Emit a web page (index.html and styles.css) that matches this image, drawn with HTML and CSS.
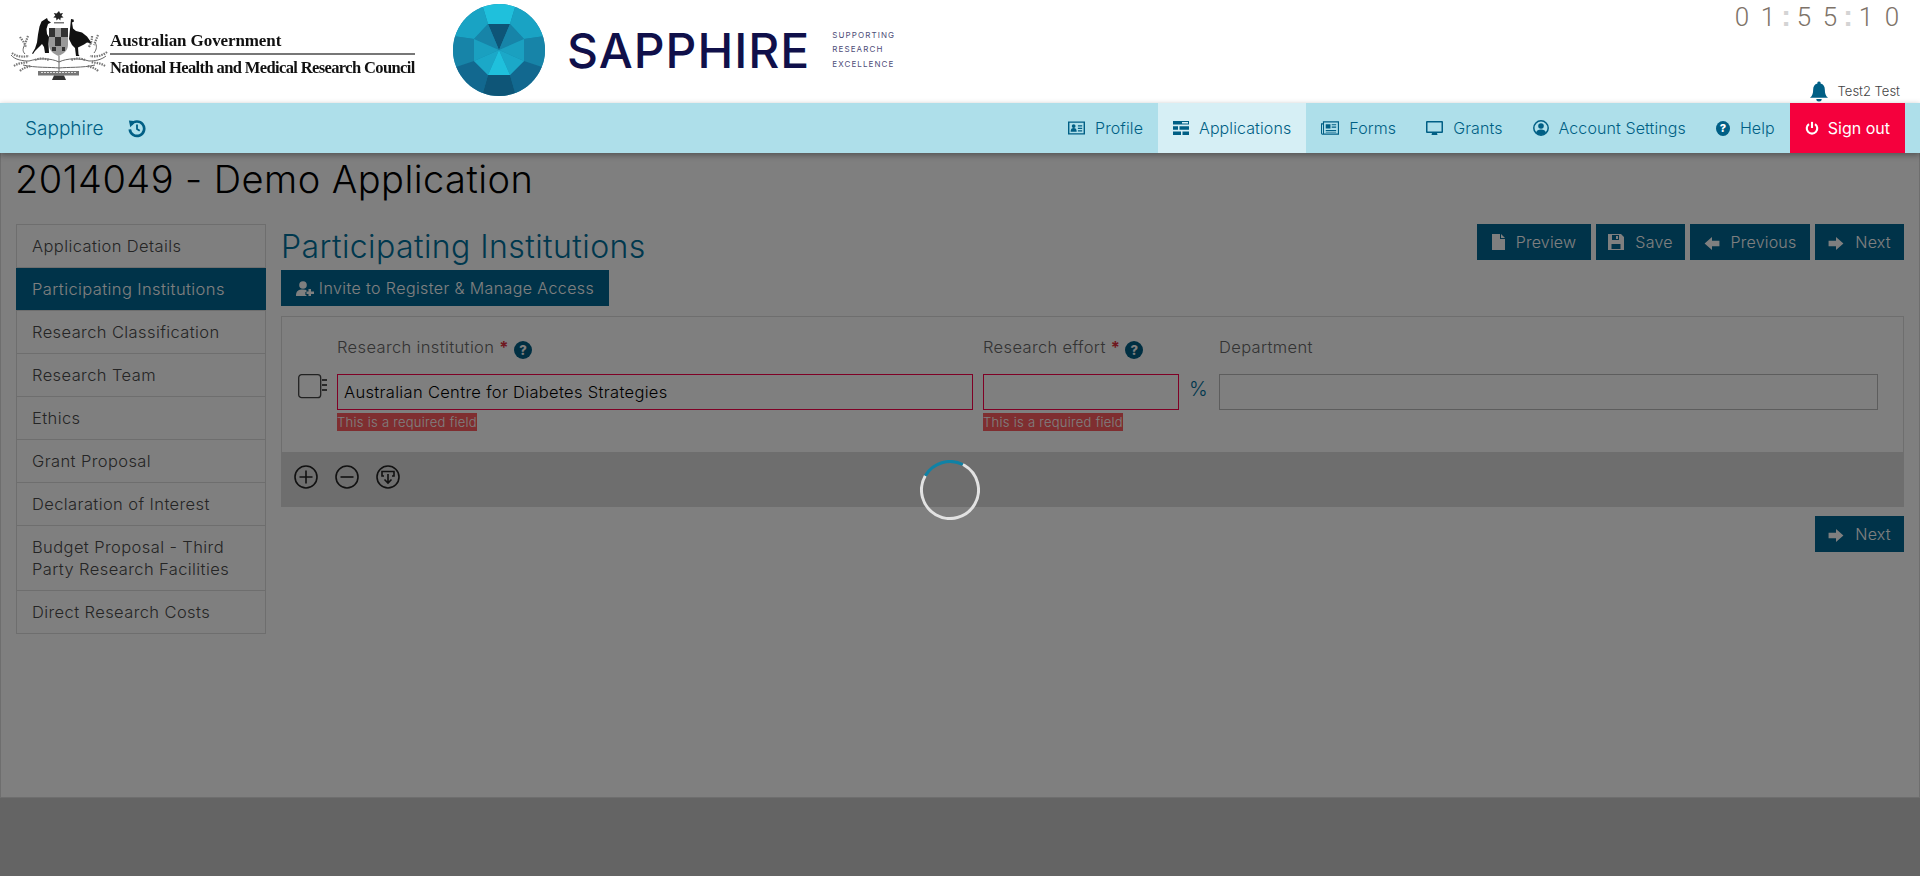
FILE: index.html
```html
<!DOCTYPE html>
<html lang="en">

<head>
    <meta charset="UTF-8">
    <meta name="viewport" content="width=device-width, initial-scale=1.0">
    <title>2014049 - Demo Application</title>
    <link rel="stylesheet" href="styles.css">
</head>

<body>
    <header class="top">
        <div class="gov-logo">
            <svg class="crest" viewBox="10 10 100 72" width="100" height="72">
                <path d="M59 11l1.200 2.600 2.800-.6-1.500 2.400 2 2-2.800.3-.4 2.800-1.800-2-2 2-.4-2.800-2.800-.3 2-2-1.500-2.400 2.800.6z" fill="#222"/>
                <path d="M54 22h10v1.500H54z" fill="#777"/>
                <path d="M47 18l1 2.500 3 2-3 1.500-1.500 5 .5 5 2 3-.5 7 .5 9h-4l-1-6-2-3-3 3-4 4-2 3-1-.5 3-5 2-6 1-8 1.500-8 2-5z" fill="#111"/>
                <path d="M71 19l2.500.5.5 2-2 1 1 6 3 2.500 6 1.500 5 4 5 7-5-1-3 2-4 2-2 1 .5 7 1 1.500h-3.500l-1-8-3-3-3-6z" fill="#111"/>
                <path d="M49 28h19v17c0 6-5 9-9.500 11C54 54 49 51 49 45z" fill="#999"/>
                <path d="M49 28h6v9h-6zM61 28h7v9h-7zM55 37h6v9h-6zM52 47h4v4h-4zM62 47h3v4h-3z" fill="#333"/>
                <g fill="none" stroke="#666" stroke-width="1">
                    <path d="M59 56v16M59 62c-8-4-20-4-30-1M59 62c8-4 20-4 30-1M29 61c-6 0-14-1-18-6M89 61c6 0 12-1 17-5"/>
                    <path d="M59 68c-8-1-24 0-36-3M59 68c8-1 24 0 36-3M25 44c-2 4-3 7 0 10M95 42c2 4 2 7-1 11"/>
                </g>
                <g fill="none" stroke="#777" stroke-width="2.200" stroke-dasharray="1.500 1">
                    <path d="M20 37c2 3 5 6 6 11M28 36l-3 8M92 36c0 4-1 7-3 11M98 35l-4 10"/>
                    <path d="M12 53c5 4 11 4 17 3M107 52c-5 4-11 5-17 4M14 66c4-3 9-3 14-4M105 66c-4-3-9-3-14-4M20 71c3-3 7-4 11-5M98 71c-3-3-7-4-11-5"/>
                    <path d="M35 60c4-2 9-2 14 0M85 60c-4-2-9-2-14 0"/>
                </g>
                <path d="M38 71h41v4.500H38z" fill="#777"/>
                <path d="M41 72.500h35" stroke="#ddd" stroke-width="1" stroke-dasharray="2 1"/>
                <path d="M54 75.500h10l2 4.500H52z" fill="#333"/>
            </svg>
            <div class="gov-text">
                <div class="gov-line gov-first">Australian Government</div>
                <div class="gov-line gov-second">National Health and Medical Research Council</div>
            </div>
        </div>
        <div class="sapphire-logo">
            <svg class="gem" viewBox="0 0 92 92" width="92" height="92">
                <defs>
                    <clipPath id="gemclip"><circle cx="46" cy="46" r="46"/></clipPath>
                </defs>
                <g clip-path="url(#gemclip)">
                    <rect width="92" height="92" fill="#1784a8"/>
                    <path d="M29 0H63L57 20 35 20z" fill="#1fc0dc"/>
                    <path d="M63 0H92V32L71 35 57 20z" fill="#19a3c4"/>
                    <path d="M29 0H0V32L21 35 35 20z" fill="#19a3c4"/>
                    <path d="M0 32L21 35V57L0 64z" fill="#1784a8"/>
                    <path d="M92 32L71 35V57L92 64z" fill="#1784a8"/>
                    <path d="M0 64L21 57 35 71 29 92H0z" fill="#12688f"/>
                    <path d="M92 64L71 57 57 71 63 92H92z" fill="#12688f"/>
                    <path d="M35 71H57L63 92H29z" fill="#0e5577"/>
                    <path d="M35 20H57L46 46z" fill="#0e5577"/>
                    <path d="M35 20L21 35 46 46z" fill="#1784a8"/>
                    <path d="M57 20L71 35 46 46z" fill="#1784a8"/>
                    <path d="M21 35V57L46 46z" fill="#1aa0c0"/>
                    <path d="M71 35V57L46 46z" fill="#1aa0c0"/>
                    <path d="M21 57L35 71 46 46z" fill="#1ba8c8"/>
                    <path d="M71 57L57 71 46 46z" fill="#1ba8c8"/>
                    <path d="M35 71H57L46 46z" fill="#1fc0dc"/>
                </g>
            </svg>
            <div class="sapphire-name">SAPPHIRE</div>
            <div class="sapphire-tag">
                <span>SUPPORTING</span>
                <span>RESEARCH</span>
                <span>EXCELLENCE</span>
            </div>
        </div>
        <div class="top-right">
            <div class="clock">
                <span class="digit">0</span><span class="digit">1</span><span class="colon">:</span><span class="digit">5</span><span class="digit">5</span><span class="colon">:</span><span class="digit">1</span><span class="digit">0</span>
            </div>
            <div class="user">
                <svg class="bell" viewBox="0 0 20 22" width="18" height="21"><path d="M10 0a1.800 1.800 0 0 1 1.800 2.200C15 3 16.500 5.600 16.500 9c0 4 .8 6.500 3.500 9H0c2.700-2.500 3.500-5 3.500-9 0-3.400 1.500-6 4.700-6.800A1.800 1.800 0 0 1 10 0zM7 19.200h6a3 2.800 0 0 1-6 0z" fill="#005f85"/></svg>
                <span>Test2 Test</span>
            </div>
        </div>
    </header>

    <nav class="nav">
        <div class="nav-left">
            <a class="brand">Sapphire</a>
            <svg class="history" viewBox="0 0 20 20" width="18" height="19">
                <path d="M3.500 5.500A8 8 0 1 1 2 11" fill="none" stroke="#005f85" stroke-width="3"/>
                <path d="M1 1l8 1-6.500 6.500z" fill="#005f85"/>
                <path d="M10 5.500V10.500L13 12.500" fill="none" stroke="#005f85" stroke-width="2"/>
            </svg>
        </div>
        <ul class="menu">
            <li class="menu-item">
                <svg viewBox="0 0 18 14" width="17" height="14"><path d="M0 0h18v14H0zM1.500 1.500v11h15v-11z" fill="#005f85" fill-rule="evenodd"/><circle cx="6" cy="5" r="2" fill="#005f85"/><path d="M2.800 11c0-3 1.200-4 3.200-4s3.200 1 3.200 4zM10.500 4h4.500v1.300h-4.500zM10.500 6.700h4.500V8h-4.500zM10.500 9.400h4.500v1.300h-4.500z" fill="#005f85"/></svg>
                Profile
            </li>
            <li class="menu-item active">
                <svg viewBox="0 0 16 14" width="16" height="14"><path d="M0 0h16v3.600H0zM9 1v1.600h6V1zM0 5.200h5v3.600H0zM6.500 5.200H16v3.600H6.500zM0 10.400h8V14H0zM9.500 10.400H16V14H9.500z" fill="#005f85" fill-rule="evenodd"/></svg>
                Applications
            </li>
            <li class="menu-item">
                <svg viewBox="0 0 19 14" width="18" height="14"><path d="M0 2h2V0h17v14H1.500A1.500 1.500 0 0 1 0 12.500zM3.200 1.200v11.600h14.600V1.200zM1.100 3.200v9.300a.5.500 0 0 0 1 0V3.200z" fill="#005f85" fill-rule="evenodd"/><path d="M5 3h5v4.500H5zM11.300 3H16v1.200h-4.700zM11.300 5.500H16v1.200h-4.700zM5 9h11v1.200H5zM5 11h11v.8H5z" fill="#005f85"/></svg>
                Forms
            </li>
            <li class="menu-item">
                <svg viewBox="0 0 17 15" width="17" height="15"><path d="M1 0h15a1 1 0 0 1 1 1v10a1 1 0 0 1-1 1h-5l.5 2h-6l.5-2H1a1 1 0 0 1-1-1V1a1 1 0 0 1 1-1zM1.500 1.500v9h14v-9z" fill="#005f85" fill-rule="evenodd"/></svg>
                Grants
            </li>
            <li class="menu-item">
                <svg viewBox="0 0 16 16" width="16" height="16"><circle cx="8" cy="8" r="7.200" fill="none" stroke="#005f85" stroke-width="1.500"/><circle cx="8" cy="6" r="2.800" fill="#005f85"/><path d="M3 13c.5-2.700 2.500-3.500 5-3.500s4.500.8 5 3.500c-1.300 1.300-3 2-5 2s-3.700-.7-5-2z" fill="#005f85"/></svg>
                Account Settings
            </li>
            <li class="menu-item">
                <span class="q-mark q-small">?</span>
                Help
            </li>
            <li class="menu-item signout">
                <svg viewBox="0 0 16 16" width="14" height="16"><path d="M8 1v7" stroke="#fff" stroke-width="2.400" fill="none"/><path d="M4.500 3.500a6 6 0 1 0 7 0" stroke="#fff" stroke-width="2.400" fill="none"/></svg>
                Sign out
            </li>
        </ul>
    </nav>

    <main class="page">
        <h1 class="app-title">2014049 - Demo Application</h1>
        <div class="layout">
            <ul class="side">
                <li>Application Details</li>
                <li class="current">Participating Institutions</li>
                <li>Research Classification</li>
                <li>Research Team</li>
                <li>Ethics</li>
                <li>Grant Proposal</li>
                <li>Declaration of Interest</li>
                <li>Budget Proposal - Third Party Research Facilities</li>
                <li>Direct Research Costs</li>
            </ul>
            <section class="content">
                <div class="content-head">
                    <h2>Participating Institutions</h2>
                    <div class="actions">
                        <button class="btn btn-preview" type="button">
                            <svg viewBox="0 0 13 16" width="13" height="16"><path d="M0 0h8v5h5v11H0zM9 0l4 4H9z" fill="#fff"/></svg>
                            Preview
                        </button>
                        <button class="btn btn-save" type="button">
                            <svg viewBox="0 0 16 16" width="16" height="16"><path d="M0 0h13l3 3v13H0zM4 1v5h7V1zM8 2h2v3H8zM3.500 10v5h9v-5z" fill="#fff" fill-rule="evenodd"/></svg>
                            Save
                        </button>
                        <button class="btn btn-prev" type="button">
                            <svg class="arrow" viewBox="0 0 16 14" width="16" height="13"><path d="M0 7L8 0v4h8v6H8v4z" fill="#fff"/></svg>
                            Previous
                        </button>
                        <button class="btn btn-next" type="button">
                            <svg class="arrow" viewBox="0 0 16 14" width="16" height="13"><path d="M16 7L8 0v4H0v6h8v4z" fill="#fff"/></svg>
                            Next
                        </button>
                    </div>
                </div>
                <button class="btn btn-invite" type="button">
                    <svg viewBox="0 0 18 15" width="18" height="15"><circle cx="7" cy="4" r="3.800" fill="#fff"/><path d="M0 15c0-5 2-6.500 7-6.500 1.500 0 2.600.2 3.400.5V11h-1v3h1v1z" fill="#fff"/><path d="M12.500 8h2.500v2.500h3V13h-3v2h-2.500v-2h-2v-2.500h2z" fill="#fff"/></svg>
                    Invite to Register &amp; Manage Access
                </button>

                <div class="panel">
                    <div class="panel-body">
                        <div></div>
                        <div class="field-label">Research institution <span class="req">*</span> <span class="q-mark">?</span></div>
                        <div class="field-label">Research effort <span class="req">*</span> <span class="q-mark">?</span></div>
                        <div></div>
                        <div class="field-label">Department</div>

                        <div class="row-icon">
                            <svg viewBox="0 0 30 25" width="30" height="25"><rect x=".7" y=".7" width="22" height="23" rx="3" fill="none" stroke="#444" stroke-width="1.300"/><path d="M24 5h5v2h-5zM24 10h5v2h-5zM24 15h5v2h-5z" fill="#555"/></svg>
                        </div>
                        <div>
                            <input class="field invalid wide" type="text" value="Australian Centre for Diabetes Strategies">
                            <span class="error-tag">This is a required field</span>
                        </div>
                        <div>
                            <input class="field invalid" type="text" value="">
                            <span class="error-tag">This is a required field</span>
                        </div>
                        <div class="percent">%</div>
                        <div>
                            <input class="field" type="text" value="">
                        </div>
                    </div>
                    <div class="panel-foot">
                        <svg viewBox="0 0 24 24" width="24" height="24"><circle cx="12" cy="12" r="11" fill="none" stroke="#222" stroke-width="1.600"/><path d="M12 5.500v13M5.500 12h13" stroke="#222" stroke-width="1.600"/></svg>
                        <svg viewBox="0 0 24 24" width="24" height="24"><circle cx="12" cy="12" r="11" fill="none" stroke="#222" stroke-width="1.600"/><path d="M5.500 12h13" stroke="#222" stroke-width="1.600"/></svg>
                        <svg viewBox="0 0 24 24" width="24" height="24"><circle cx="12" cy="12" r="11" fill="none" stroke="#222" stroke-width="1.600"/><path d="M8 11H6V6.500h12V11h-2M12 9v9M8.500 14.500L12 18l3.500-3.500" fill="none" stroke="#222" stroke-width="1.600"/></svg>
                    </div>
                </div>

                <div class="bottom-actions">
                    <button class="btn btn-next" type="button">
                        <svg class="arrow" viewBox="0 0 16 14" width="16" height="13"><path d="M16 7L8 0v4H0v6h8v4z" fill="#fff"/></svg>
                        Next
                    </button>
                </div>
            </section>
        </div>
    </main>

    <div class="overlay">
        <svg class="spinner" viewBox="0 0 60 60" width="60" height="60">
            <circle cx="30" cy="30" r="28.500" fill="none" stroke="#e2e2e2" stroke-width="3" stroke-dasharray="0 43 136.100" transform="rotate(-150 30 30)"/>
            <circle cx="30" cy="30" r="28.500" fill="none" stroke="#0f82a6" stroke-width="3" stroke-dasharray="43 136.100" transform="rotate(-150 30 30)"/>
        </svg>
    </div>
</body>

</html>
```

FILE: styles.css
```css
* {
    box-sizing: border-box;
}

html,
body {
    height: 100%;
}

body {
    margin: 0;
    height: 876px;
    overflow: hidden;
    background-color: #c8c8c8;
    font-family: Inter, "Open Sans", sans-serif;
    font-weight: 300;
    font-size: 16.5px;
    letter-spacing: .4px;
    color: #555;
}

ul {
    list-style: none;
    margin: 0;
    padding: 0;
}

/* header */
.top {
    display: flex;
    height: 103px;
    background-color: #fff;
    padding-left: 10px;
    letter-spacing: 0;
}

.gov-logo {
    display: flex;
    width: 443px;
    padding-top: 10px;
}

.crest {
    filter: blur(.4px);
}

.gov-text {
    width: 305px;
    padding-top: 21px;
    font-family: "Liberation Serif", serif;
    font-weight: 700;
    color: #111;
    filter: blur(.3px);
}

.gov-line {
    font-size: 17px;
    line-height: 20px;
    white-space: nowrap;
}

.gov-first {
    border-bottom: 2px solid #777;
    padding-bottom: 2px;
    margin-bottom: 3px;
    letter-spacing: -.1px;
}

.gov-second {
    font-size: 16.5px;
    letter-spacing: -.62px;
}

.sapphire-logo {
    display: flex;
    align-items: center;
    height: 100px;
}

.sapphire-name {
    margin-left: 22px;
    font-size: 48px;
    font-weight: 500;
    color: #10104a;
    letter-spacing: 1px;
}

.sapphire-tag {
    display: flex;
    flex-direction: column;
    gap: 3px;
    margin-left: 22px;
    font-size: 8px;
    font-weight: 400;
    line-height: 11.500px;
    letter-spacing: 1.100px;
    color: #4d4d78;
}

.top-right {
    display: flex;
    flex-direction: column;
    justify-content: space-between;
    align-items: flex-end;
    margin-left: auto;
    padding-right: 15px;
}

.clock {
    display: flex;
    height: 34px;
    font-family: Roboto, sans-serif;
    font-weight: 300;
    font-size: 26px;
    line-height: 34px;
    color: #7d7268;
}

.digit {
    width: 26px;
    text-align: center;
}

.colon {
    width: 10px;
    text-align: center;
    font-family: "Liberation Sans", sans-serif;
    font-weight: 700;
    font-size: 29px;
    line-height: 32px;
    color: #d4d4d4;
}

.user {
    display: flex;
    align-items: center;
    gap: 10px;
    height: 24px;
    padding-right: 5px;
    font-size: 13px;
    color: #444;
}

/* nav */
.nav {
    position: relative;
    z-index: 3;
    display: flex;
    justify-content: space-between;
    height: 50px;
    background-color: #aedfea;
    padding-right: 15px;
    box-shadow: 0 2px 6px rgba(0, 0, 0, .35);
}

.nav-left {
    display: flex;
    align-items: center;
    padding-left: 25px;
    gap: 25px;
    letter-spacing: 0;
}

.brand {
    font-size: 19px;
    color: #005f85;
}

.menu {
    display: flex;
}

.menu-item {
    display: flex;
    align-items: center;
    gap: 10px;
    padding: 0 15px;
    color: #005f85;
    font-size: 16px;
    letter-spacing: .1px;
}

.menu-item.active {
    background-color: #d6eff5;
}

.menu-item.signout {
    background-color: #f5003d;
    color: #fff;
    font-weight: 400;
    letter-spacing: 0;
    gap: 9px;
}

.q-mark {
    display: inline-flex;
    align-items: center;
    justify-content: center;
    width: 18px;
    height: 18px;
    border-radius: 50%;
    background-color: #005f85;
    color: #fff;
    font-size: 13px;
    font-weight: 800;
    letter-spacing: 0;
    vertical-align: -2px;
}

.q-small {
    width: 14px;
    height: 15px;
    font-size: 11px;
}

/* page */
.page {
    height: 645px;
    background-color: #fff;
    border: 1px solid #ddd;
    border-width: 0 1px 1px;
    padding: 0 15px;
}

.app-title {
    margin: 0 0 0 -1px;
    padding-top: 5px;
    height: 71px;
    font-size: 38px;
    line-height: 42px;
    font-weight: 300;
    letter-spacing: .44px;
    color: #000;
}

.layout {
    display: flex;
    gap: 15px;
}

.side {
    width: 250px;
    flex: none;
    align-self: flex-start;
    border: 1px solid #ddd;
    border-bottom: 0;
}

.side li {
    padding: 10px 15px;
    border-bottom: 1px solid #ddd;
    line-height: 22px;
    color: #4a4a4a;
}

.side li.current {
    background-color: #006692;
    color: #fff;
    margin: 0 -1px;
    padding-left: 16px;
}

.content {
    flex: 1;
}

.content-head {
    display: flex;
    justify-content: space-between;
    height: 46px;
}

.content-head h2 {
    margin: 0;
    font-size: 32px;
    line-height: 46px;
    font-weight: 300;
    letter-spacing: .42px;
    color: #00709c;
}

.actions {
    display: flex;
    gap: 5px;
}

.btn {
    display: inline-flex;
    align-items: center;
    justify-content: center;
    gap: 11px;
    height: 36px;
    border: 0;
    padding: 0;
    background-color: #006692;
    color: #fff;
    font-family: Inter, sans-serif;
    font-weight: 300;
    font-size: 16px;
    letter-spacing: .2px;
}

.btn .arrow {
    margin-top: 3px;
}

.btn-preview {
    width: 114px;
}

.btn-save {
    width: 89px;
}

.btn-prev {
    width: 120px;
}

.btn-next {
    width: 89px;
}

.btn-invite {
    width: 328px;
    gap: 5px;
    letter-spacing: .4px;
}

.panel {
    margin-top: 10px;
    border: 1px solid #ddd;
    border-bottom: 0;
}

.panel-body {
    display: grid;
    grid-template-columns: 55px 646px 196px 40px 659px;
    grid-template-rows: 22px auto;
    row-gap: 16px;
    padding: 19px 0 21px;
}

.field-label {
    line-height: 22px;
    color: #666;
    letter-spacing: .36px;
    white-space: nowrap;
}

.req {
    color: #e03040;
    font-weight: 700;
}

.row-icon {
    padding-left: 16px;
}

.row-icon svg {
    display: block;
}

.field {
    display: block;
    width: 100%;
    height: 36px;
    border: 1px solid #bbb;
    background-color: #fff;
    padding: 0 6px;
    font-family: Inter, sans-serif;
    font-weight: 300;
    font-size: 16.5px;
    letter-spacing: .32px;
    color: #000;
}

.field.invalid {
    border-color: #ff004b;
}

.field.wide {
    width: 636px;
}

.error-tag {
    display: block;
    width: fit-content;
    margin-top: 3px;
    background-color: #ff5c60;
    color: #fff;
    font-size: 13px;
    line-height: 18px;
    letter-spacing: .27px;
    white-space: nowrap;
}

.percent {
    padding-top: 3px;
    padding-left: 10px;
    font-size: 20px;
    color: #00709c;
}

.panel-foot {
    display: flex;
    align-items: center;
    gap: 17px;
    height: 55px;
    padding-left: 12px;
    padding-bottom: 6px;
    background-color: #dcdcdc;
}

.bottom-actions {
    display: flex;
    justify-content: flex-end;
    margin-top: 9px;
}

/* loading layer over the page */
.overlay {
    position: absolute;
    left: 0;
    right: 0;
    top: 153px;
    bottom: 0;
    z-index: 2;
    background-color: rgba(0, 0, 0, .5);
}

.spinner {
    position: absolute;
    left: 920px;
    top: 307px;
}
```
